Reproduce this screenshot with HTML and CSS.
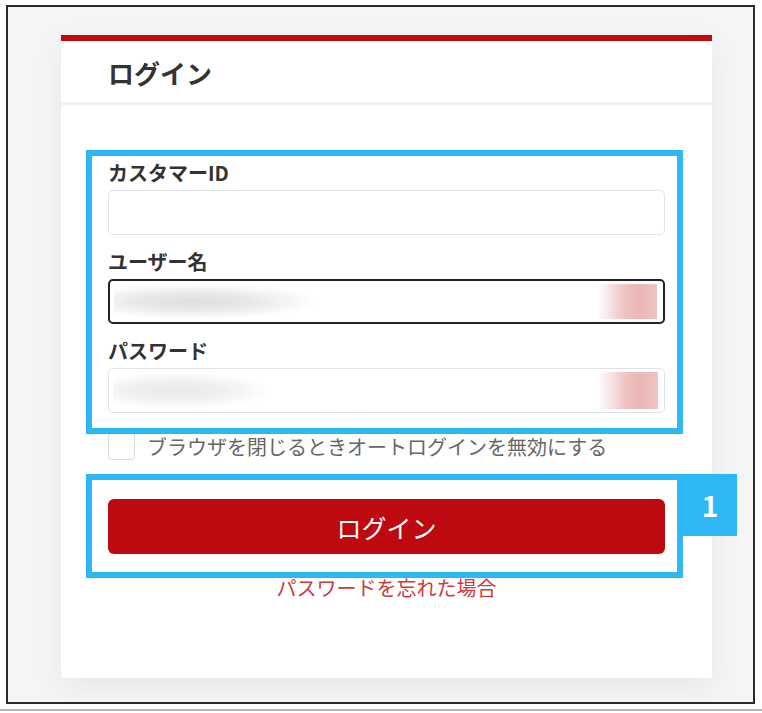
FILE: index.html
```html
<!DOCTYPE html>
<html lang="ja">
<head>
<meta charset="utf-8">
<title>ログイン</title>
<link rel="stylesheet" href="styles.css">
</head>
<body>
<div class="frame">
  <div class="card">
    <div class="card-head"><h1 class="title">ログイン</h1></div>
    <div class="card-body">
      <div class="fields">
        <div class="field">
          <div class="label">カスタマーID</div>
          <div class="input"></div>
        </div>
        <div class="field">
          <div class="label">ユーザー名</div>
          <div class="input input-focus">
            <span class="blur-grey"></span>
            <span class="blur-pink"></span>
          </div>
        </div>
        <div class="field">
          <div class="label">パスワード</div>
          <div class="input">
            <span class="blur-grey blur-light"></span>
            <span class="blur-pink"></span>
          </div>
        </div>
      </div>
      <div class="remember">
        <span class="checkbox"></span>
        <span class="remember-text">ブラウザを閉じるときオートログインを無効にする</span>
      </div>
      <button class="btn" type="button">ログイン</button>
      <a class="forgot">パスワードを忘れた場合</a>

      <div class="mark mark-fields"></div>
      <div class="mark mark-button"><span class="badge">1</span></div>
    </div>
  </div>
</div>
<div class="rule"></div>
</body>
</html>
```
FILE: styles.css
```css
* { box-sizing: border-box; }
html, body { margin: 0; padding: 0; background: #fff; }
body { font-family: "Noto Sans CJK JP", "Noto Sans", sans-serif; color: #333; }

.frame {
  margin: 5px 0 0 6px;
  width: 749px;
  height: 699px;
  border: 2px solid #2a2a2a;
  background: #f5f5f5;
  padding: 28px 0 0 53px;
}

.card {
  width: 651px;
  height: 643px;
  background: #fff;
  border-top: 6px solid #c20a10;
  box-shadow: 0 10px 30px rgba(0, 0, 0, 0.06);
}

.card-head {
  height: 64px;
  padding: 2px 0 0 47px;
  display: flex;
  align-items: center;
  border-bottom: 3px solid #f2f2f2;
}
.title {
  margin: 0;
  font-size: 26px;
  line-height: 30px;
  font-weight: 700;
  color: #333;
}

.card-body {
  position: relative;
  padding: 56px 47px 0;
}

.fields { display: flex; flex-direction: column; gap: 15px; }
.label {
  font-size: 20px;
  line-height: 24px;
  font-weight: 700;
  color: #333;
  margin-bottom: 5px;
}
.input {
  position: relative;
  height: 45px;
  border: 1px solid #dfe4ec;
  border-radius: 5px;
  background: #fff;
  overflow: hidden;
}
.input-focus { border: 2px solid #222; }

.blur-grey {
  position: absolute;
  left: 4px;
  top: 3px;
  bottom: 3px;
  width: 210px;
  background: radial-gradient(ellipse 60% 50% at 38% 50%, #dedede 0%, #e8e8e8 45%, rgba(255,255,255,0) 100%);
}
.blur-light {
  width: 160px;
  background: radial-gradient(ellipse 60% 50% at 40% 50%, #e9e9e9 0%, #efefef 45%, rgba(255,255,255,0) 100%);
}
.blur-pink {
  position: absolute;
  right: 6px;
  top: 3px;
  bottom: 3px;
  width: 60px;
  background: linear-gradient(to right, rgba(236,180,180,0) 0%, #efc4c4 45%, #ebb6b6 70%, #efc4c4 100%);
}

.remember {
  margin-top: 20px;
  display: flex;
  align-items: center;
  gap: 12px;
}
.checkbox {
  width: 27px;
  height: 27px;
  border: 1px solid #d7dce4;
  border-radius: 3px;
  background: #fff;
}
.remember-text {
  font-size: 20px;
  line-height: 27px;
  color: #666;
}

.btn {
  display: block;
  margin-top: 39px;
  width: 100%;
  height: 55px;
  border: none;
  border-radius: 6px;
  background: #bd0910;
  color: #fff;
  font-family: inherit;
  font-size: 25px;
  font-weight: 400;
  padding: 0;
}

.forgot {
  display: block;
  margin-top: 22px;
  text-align: center;
  font-size: 20px;
  line-height: 24px;
  color: #cc3a3f;
}

.mark {
  position: absolute;
  left: 25px;
  width: 597px;
  border: 6px solid #2db7f5;
}
.mark-fields { top: 45px; height: 284px; }
.mark-button { top: 369px; height: 104px; }
.badge {
  position: absolute;
  left: calc(100% + 6px);
  top: -6px;
  width: 54px;
  height: 62px;
  background: #2db7f5;
  color: #fff;
  font-size: 28px;
  font-weight: 700;
  display: flex;
  align-items: center;
  justify-content: center;
}

.rule {
  margin-top: 5px;
  height: 2px;
  background: #b3b3b3;
}
```
